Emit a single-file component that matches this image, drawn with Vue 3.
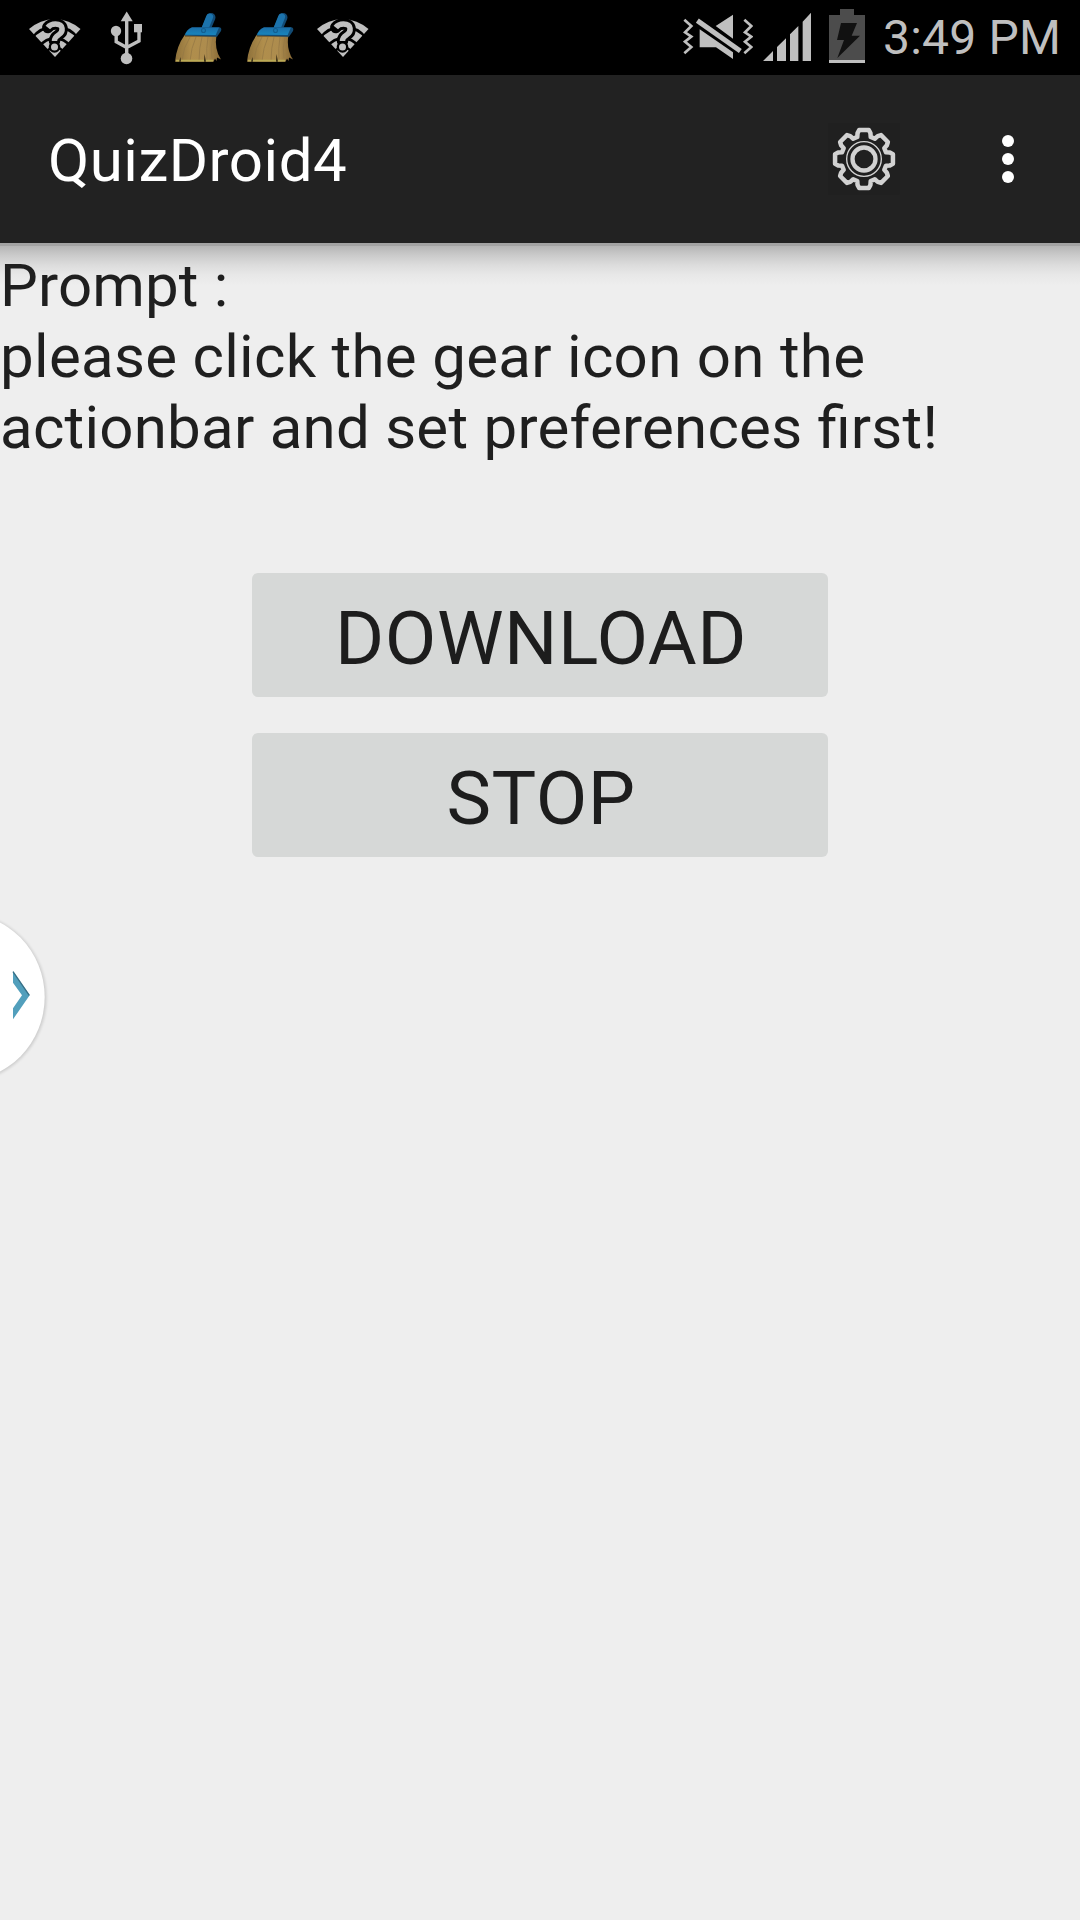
<script setup>
const slots = ['wifi', 'usb', 'broom', 'broom', 'wifi']

// Eight-toothed gear outline around the origin
const point = (r, deg) => {
  const a = (deg * Math.PI) / 180
  return `${(r * Math.sin(a)).toFixed(2)},${(-r * Math.cos(a)).toFixed(2)}`
}
const gear = Array.from({ length: 8 }, (_, i) => {
  const a = i * 45
  return [point(69, a - 17), point(80, a - 14), point(88, a - 9.5), point(88, a + 9.5), point(80, a + 14), point(69, a + 17)].join(' ')
}).join(' ')
</script>

<template>
  <div class="screen">
    <header class="status">
      <div class="notifications">
        <svg v-for="(kind, i) in slots" :key="i" width="72" height="75" viewBox="0 0 72 75">
          <g v-if="kind === 'wifi'">
            <path d="M10 29A38.5 38.5 0 0 1 61.5 29L36 57Z" fill="#bfbfbf" />
            <g fill="none" stroke="#000" stroke-width="2.6">
              <path d="M12.5 38.5A29.5 29.5 0 0 1 59.5 38.5" />
              <path d="M21 46A18.5 18.5 0 0 1 51 46" />
              <path d="M28 51.5A9.7 9.7 0 0 1 44 51.5" />
            </g>
            <g fill="none" stroke-linejoin="round">
              <path d="M28.8 27.5C31 24.5 34 24 36.5 24C45 24 44.5 32 39.5 35C36 37.3 35.5 38.5 35.5 41" stroke="#000" stroke-width="11.5" stroke-linecap="round" />
              <circle cx="35.5" cy="47" r="5.8" fill="#000" />
              <path d="M28.8 27.5C31 24.5 34 24 36.5 24C45 24 44.5 32 39.5 35C36 37.3 35.5 38.5 35.5 41" stroke="#bfbfbf" stroke-width="5.5" />
              <circle cx="35.5" cy="47" r="3.5" fill="#bfbfbf" />
            </g>
          </g>
          <g v-else-if="kind === 'usb'">
            <g fill="#bfbfbf">
              <path d="M35.7 11.5L41.7 21.3H29.7Z" />
              <circle cx="35.5" cy="58.5" r="5.8" />
              <circle cx="25" cy="31" r="5.2" />
              <path d="M43 24H51V32.3H43Z" />
            </g>
            <path d="M35.7 18V56M25.2 31V41.8L35.7 47.5M48 30V41L35.7 47.5" fill="none" stroke="#bfbfbf" stroke-width="3.4" />
          </g>
          <g v-else>
            <defs>
              <linearGradient id="straw" x1="0" x2="1">
                <stop offset="0" stop-color="#8e713b" />
                <stop offset=".35" stop-color="#b08e4c" />
                <stop offset=".7" stop-color="#ad8c4e" />
                <stop offset="1" stop-color="#866734" />
              </linearGradient>
              <linearGradient id="head" x1="0" x2="0" y1="0" y2="1">
                <stop offset="0" stop-color="#1b6ea8" />
                <stop offset="1" stop-color="#1785bd" />
              </linearGradient>
            </defs>
            <path d="M22 34.5Q13.5 46 12 61.7H50.5L52 58.5L53.5 61L54 57.5L58 59.5Q51 49 53.5 35Z" fill="url(#straw)" />
            <path d="M27 37Q20 48 19 60M33 37Q28 48 27 61M39 37Q36 48 36 61M45 37Q43 48 44 61M50 37Q47 48 49 58" fill="none" stroke="#957845" stroke-width=".8" />
            <path d="M13 60.7H50" stroke="#b9aa55" stroke-width="1.7" />
            <path d="M16 61.7L17.5 57L18 61.7M41 61.7L41.5 54L43 61.7" fill="#352a14" />
            <path d="M22 36H53" stroke="#5f4a26" stroke-width="1.2" />
            <path d="M48 17.5L43 29" stroke="#124b76" stroke-width="9" stroke-linecap="round" />
            <path d="M46.6 17L42 28.5" stroke="#1c73ac" stroke-width="7" stroke-linecap="round" />
            <path d="M29 27.3H56.5Q59 28 58 31L54 36.7L21.5 35.5Q24 29 29 27.3Z" fill="#124b74" />
            <path d="M29 27.6H56L52.7 35L22 34.7Q24.5 29 29 27.6Z" fill="url(#head)" />
            <circle cx="40.5" cy="30.5" r="2" fill="none" stroke="#125f91" stroke-width="1.1" />
          </g>
        </svg>
      </div>
      <div class="system">
        <svg class="mute" width="70" height="75" viewBox="39 0 210 225">
          <g fill="none" stroke="#bfbfbf" stroke-width="8">
            <path d="M43 59L64 78L45 97L64 110L45 125L64 141L43 160" />
            <path d="M223 59L244 78L225 97L244 110L225 125L244 141L223 160" />
          </g>
          <path d="M137 78L189 44V116ZM89 88V142H138L189 177V157Z" fill="#bfbfbf" />
          <path d="M82 62L211 153" stroke="#bfbfbf" stroke-width="15" />
        </svg>
        <svg class="signal" width="48" height="75" viewBox="279 0 144 225">
          <path d="M279 183L309 153V183ZM321 183V141L348 115V183ZM360 183V103L385 78V183ZM398 183V65L423 38V183Z" fill="#bfbfbf" />
        </svg>
        <svg class="battery" width="36" height="75" viewBox="477 0 108 225">
          <path d="M477 45H510V27H552V45H585V180H477Z" fill="#4c4c4c" />
          <path d="M477 180H585V189H477Z" fill="#bfbfbf" />
          <path d="M513 69H561L545 107H570L502 174L522 120H501Z" fill="#111" />
        </svg>
        <span class="clock">3:49 PM</span>
      </div>
    </header>

    <nav class="bar">
      <h1>QuizDroid4</h1>
      <svg class="gear" width="72" height="72" viewBox="-108 -108 216 216">
        <rect x="-108" y="-108" width="214" height="214" fill="#202020" />
        <g fill="none" stroke="#d2d2d2">
          <polygon :points="gear" stroke-width="13.5" stroke-linejoin="round" />
          <circle r="52" stroke-width="4" />
          <circle r="34.5" stroke-width="13" />
        </g>
      </svg>
      <svg class="more" width="12" height="48" viewBox="0 0 12 48">
        <g fill="#fff">
          <circle cx="6" cy="6" r="6" />
          <circle cx="6" cy="24" r="6" />
          <circle cx="6" cy="42" r="6" />
        </g>
      </svg>
    </nav>

    <main class="content">
      <p class="prompt">
        <span class="intro">Prompt :</span><br />
        <span class="first-line">please click the gear icon on the</span><br />
        <span class="second-line">actionbar and set preferences <span class="ligature">fi</span>rst!</span>
      </p>
      <div class="actions">
        <button>DOWNLOAD</button>
        <button>STOP</button>
      </div>
    </main>

    <svg class="handle" width="60" height="190" viewBox="0 0 180 570">
      <defs>
        <filter id="soft" x="-20%" y="-20%" width="140%" height="140%"><feGaussianBlur stdDeviation="5" /></filter>
      </defs>
      <ellipse cx="-112" cy="293" rx="251" ry="254" fill="#000" opacity=".14" filter="url(#soft)" />
      <ellipse cx="-112" cy="291" rx="246" ry="251" fill="#fff" />
      <path d="M39 214L89 286L39 358V325L66 286L39 248Z" fill="#529fbc" />
      <path d="M39 215L88 286" stroke="#376f85" stroke-width="4" />
    </svg>
  </div>
</template>

<style>
body { background: #eee; }
</style>

<style scoped>
.screen {
  position: relative;
  width: 1080px;
  height: 1920px;
  overflow: hidden;
  background: #eee;
  color: #1f1f1f;
  font-family: Roboto, "Liberation Sans", sans-serif;
  display: flex;
  flex-direction: column;
}
svg { display: block; flex: none; }
.status {
  height: 75px;
  background: #000;
  display: flex;
  justify-content: space-between;
  padding-left: 19px;
}
.notifications { display: flex; }
.system { display: flex; width: 397px; }
.signal { margin-left: 10px; }
.battery { margin-left: 18px; }
.clock {
  margin-left: 18px;
  font-size: 48px;
  line-height: 75px;
  letter-spacing: .2px;
  color: #bfbfbf;
  white-space: nowrap;
}
.bar {
  height: 168px;
  box-sizing: border-box;
  padding: 0 66px 0 48px;
  background: #222;
  display: flex;
  align-items: center;
}
h1 {
  margin: 0 auto 0 0;
  padding-top: 4px;
  font-size: 60px;
  font-weight: 400;
  line-height: 72px;
  letter-spacing: .5px;
  color: #fff;
}
.gear { margin-right: 102px; }
.content {
  flex: 1;
  padding-top: 7px;
  background: linear-gradient(#a3a3a3 0, #a3a3a3 3px, #b5b5b5 3px, #cacaca 12px, #dcdcdc 22px, #e8e8e8 32px, #eee 43px);
}
.prompt {
  margin: 0;
  font-size: 60px;
  line-height: 71px;
  white-space: nowrap;
}
.intro { letter-spacing: .15px; }
.first-line { letter-spacing: .3px; }
.second-line { letter-spacing: .25px; }
.ligature { letter-spacing: 0; }
.actions {
  margin-top: 110px;
  display: flex;
  flex-direction: column;
  align-items: center;
  gap: 36px;
}
button {
  width: 576px;
  height: 124px;
  padding: 6px 0 0 2px;
  border: 0;
  border-radius: 6px;
  background: #d6d8d7;
  color: #1d1d1d;
  font: 400 75px/88px Roboto, "Liberation Sans", sans-serif;
  letter-spacing: .5px;
}
.handle {
  position: absolute;
  left: 0;
  top: 900px;
}
</style>
